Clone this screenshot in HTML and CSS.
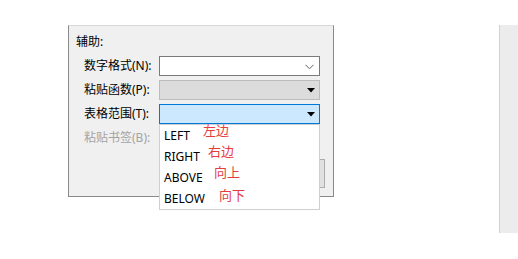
FILE: index.html
```html
<!DOCTYPE html>
<html lang="zh">
<head>
<meta charset="utf-8">
<link rel="stylesheet" href="styles.css">
</head>
<body>
<div class="page">
  <div class="dialog">
    <div class="title">辅助:</div>
    <div class="rows">
      <div class="label">数字格式(N):</div>
      <div class="combo combo-normal">
        <svg class="chev" width="9" height="6" viewBox="0 0 9 6"><polyline points="0.5,0.8 4.5,4.8 8.5,0.8" fill="none" stroke="#606060" stroke-width="1"/></svg>
      </div>
      <div class="label">粘贴函数(P):</div>
      <div class="combo combo-disabled">
        <svg class="tri" width="8" height="5" viewBox="0 0 8 5"><polygon points="0,0 8,0 4,4.5" fill="#000"/></svg>
      </div>
      <div class="label">表格范围(T):</div>
      <div class="combo combo-focus">
        <svg class="tri" width="8" height="5" viewBox="0 0 8 5"><polygon points="0,0 8,0 4,4.5" fill="#000"/></svg>
        <ul class="list">
          <li>LEFT<span class="note n1">左边</span></li>
          <li>RIGHT<span class="note n2">右边</span></li>
          <li>ABOVE<span class="note n3">向上</span></li>
          <li>BELOW<span class="note n4">向下</span></li>
        </ul>
      </div>
      <div class="label disabled">粘贴书签(B):</div>
      <div class="combo combo-hidden"></div>
    </div>
    <div class="button"></div>
  </div>
  <div class="strip"></div>
</div>
</body>
</html>
```
FILE: styles.css
```css
html, body {
  margin: 0;
  padding: 0;
  background: #ffffff;
}
body {
  font-family: "Noto Sans", "Noto Sans CJK SC", sans-serif;
  font-size: 12px;
  color: #000;
}
.page {
  display: flex;
  align-items: flex-start;
  padding-top: 25px;
}
.dialog {
  margin-left: 68px;
  width: 266px;
  height: 172px;
  box-sizing: border-box;
  border: 1px solid #8a8a8a;
  border-top-color: #d8d8d8;
  background: #f0f0f0;
  padding: 7px 0 0 7px;
  display: flex;
  flex-direction: column;
}
.title {
  line-height: 18px;
  height: 18px;
}
.rows {
  margin-top: 5px;
  margin-left: 8px;
  display: grid;
  grid-template-columns: 75px 161px;
  grid-auto-rows: 20px;
  row-gap: 4px;
}
.label {
  line-height: 20px;
  white-space: nowrap;
}
.label.disabled {
  color: #a3a3a3;
}
.combo {
  box-sizing: border-box;
  height: 20px;
  border: 1px solid #7a7a7a;
  position: relative;
}
.combo-normal {
  background: #ffffff;
}
.combo-disabled {
  background: #dcdcdc;
  border-color: #bcbcbc;
}
.combo-focus {
  background: #cce8ff;
  border-color: #0078d7;
}
.combo-hidden {
  border: none;
}
.chev {
  position: absolute;
  right: 5px;
  top: 7px;
}
.tri {
  position: absolute;
  right: 4px;
  top: 7px;
}
.list {
  position: absolute;
  left: -1px;
  top: 19px;
  width: 161px;
  box-sizing: border-box;
  margin: 0;
  padding: 0;
  list-style: none;
  background: #ffffff;
  border: 1px solid #cfcfcf;
  z-index: 2;
}
.list li {
  position: relative;
  height: 21px;
  line-height: 21px;
  padding-left: 4px;
}
.note {
  position: absolute;
  color: #e53c3c;
  font-family: "Noto Sans CJK SC", sans-serif;
  font-size: 13px;
  line-height: 16px;
}
.n1 { left: 43px; top: -3px; }
.n2 { left: 48px; top: -3px; }
.n3 { left: 54px; top: -3px; }
.n4 { left: 59px; top: -1px; }
.button {
  align-self: flex-end;
  margin-top: 11px;
  margin-right: 8px;
  width: 75px;
  height: 29px;
  box-sizing: border-box;
  border: 1px solid #adadad;
  background: #e1e1e1;
}
.strip {
  margin-left: 165px;
  width: 19px;
  height: 208px;
  box-sizing: border-box;
  background: #ececec;
  border-left: 1px solid #d2d2d2;
}
```
